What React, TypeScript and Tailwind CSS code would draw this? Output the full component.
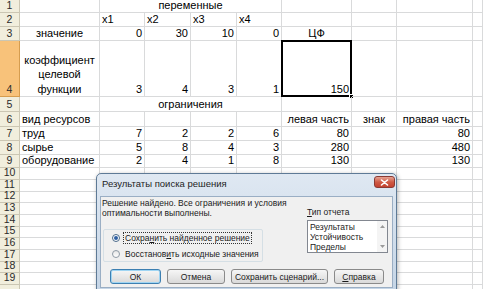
import React from 'react'

type Cell = { t?: string; a?: 'l' | 'r' | 'c' }

interface Row {
  n?: number
  h: string
  cells?: Cell[]
  merged?: string
  sel?: boolean
}

// ширины колонок A..I
const colW = ['w-[80px]', 'w-[45px]', 'w-[46px]', 'w-[46px]', 'w-[45px]', 'w-[70px]', 'w-[45px]', 'w-[76px]', 'w-[10px]']

const r = (t: string): Cell => ({ t, a: 'r' })
const l = (t: string): Cell => ({ t, a: 'l' })
const c = (t: string): Cell => ({ t, a: 'c' })

const rows: Row[] = [
  { n: 1, h: 'h-[13px]', merged: 'переменные' },
  { n: 2, h: 'h-[14px]', cells: [{}, l('x1'), l('x2'), l('x3'), l('x4'), {}, {}, {}, {}] },
  { n: 3, h: 'h-[14px]', cells: [c('значение'), r('0'), r('30'), r('10'), r('0'), c('ЦФ'), {}, {}, {}] },
  { n: 4, h: 'h-[56px]', sel: true, cells: [c('коэффициент целевой функции'), r('3'), r('4'), r('3'), r('1'), r('150'), {}, {}, {}] },
  { n: 5, h: 'h-[15px]', merged: 'ограничения' },
  { n: 6, h: 'h-[15px]', cells: [l('вид ресурсов'), {}, {}, {}, {}, r('левая часть'), c('знак'), r('правая часть'), {}] },
  { n: 7, h: 'h-[14px]', cells: [l('труд'), r('7'), r('2'), r('2'), r('6'), r('80'), {}, r('80'), {}] },
  { n: 8, h: 'h-[14px]', cells: [l('сырье'), r('5'), r('8'), r('4'), r('3'), r('280'), {}, r('480'), {}] },
  { n: 9, h: 'h-[13px]', cells: [l('оборудование'), r('2'), r('4'), r('1'), r('8'), r('130'), {}, r('130'), {}] },
  { n: 10, h: 'h-[12px]' },
  { n: 11, h: 'h-[12px]' },
  { n: 12, h: 'h-[11px]' },
  { n: 13, h: 'h-[12px]' },
  { n: 14, h: 'h-[12px]' },
  { n: 15, h: 'h-[11px]' },
  { n: 16, h: 'h-[12px]' },
  { n: 17, h: 'h-[12px]' },
  { n: 18, h: 'h-[11px]' },
  { n: 19, h: 'h-[12px]' },
  { h: 'h-[12px]' },
]

const alignCls = (a?: string) =>
  a === 'r' ? 'justify-end pr-[2px]' : a === 'c' ? 'justify-center text-center' : 'justify-start pl-[2px]'

function GridCell({ w, cell, sel }: { w: string; cell?: Cell; sel?: boolean }) {
  return (
    <div
      className={`${w} relative flex shrink-0 items-end border-r border-b border-[#d9dadb] leading-[13px] ${alignCls(cell?.a)}`}
    >
      {cell?.t && <span className="whitespace-pre-line leading-[14.5px]">{cell.t}</span>}
      {sel && (
        <>
          <div className="absolute -left-[1px] -top-[1px] -right-[1px] -bottom-[1px] border-2 border-black" />
          <div className="absolute -right-[3px] -bottom-[3px] w-[5px] h-[5px] bg-black border border-white" />
        </>
      )}
    </div>
  )
}

function Sheet() {
  return (
    <div className="flex flex-col">
      {rows.map((row, idx) => (
        <div key={idx} className={`flex ${row.h}`}>
          <div
            className={`w-[20px] shrink-0 flex items-end justify-center border-r border-b text-[10.5px] leading-[13px] text-[#2b2b2b] ${
              row.sel ? 'bg-[#f8c27a] border-[#d69d4f]' : 'bg-[#f1eedd] border-[#cbc6b3]'
            }`}
          >
            {row.n}
          </div>
          {row.merged ? (
            <>
              <GridCell w={colW[0]} />
              <GridCell w="w-[182px]" cell={c(row.merged)} />
              {colW.slice(5).map((w, i) => (
                <GridCell key={i} w={w} />
              ))}
            </>
          ) : (
            colW.map((w, i) => (
              <GridCell key={i} w={w} cell={row.cells?.[i]} sel={row.sel && i === 5} />
            ))
          )}
        </div>
      ))}
    </div>
  )
}

function Btn({ w, children, def }: { w: string; children: React.ReactNode; def?: boolean }) {
  return (
    <div
      className={`${w} h-[15px] flex items-center justify-center rounded-[3px] border bg-gradient-to-b from-[#f6f6f6] via-[#e8e8e8] to-[#d9d9d9] ${
        def ? 'border-[#3c7fb1] shadow-[inset_0_0_0_1px_#9fd5f3]' : 'border-[#8a8a8a]'
      }`}
    >
      {children}
    </div>
  )
}

function Dialog() {
  return (
    <div className="absolute left-[96px] top-[173px] w-[301px] h-[118px] rounded-t-[5px] border border-[#5e7a96] bg-gradient-to-b from-[#dfe8f2] to-[#c5d5e6] px-[3px] shadow-[1px_1px_4px_rgba(0,0,0,0.3)]">
      {/* Заголовок */}
      <div className="flex h-[22px] items-start justify-between">
        <span className="pl-[2px] pt-[4px] text-[9.5px] leading-[11px] text-[#1e1e1e]">Результаты поиска решения</span>
        <div className="mt-[2px] -mr-[2px] w-[21px] h-[12px] flex items-center justify-center rounded-[3px] border border-[#8b3a33] bg-gradient-to-b from-[#e5a293] via-[#cf5a45] to-[#c3412f]">
          <svg width="9" height="7" viewBox="0 0 9 7">
            <path d="M1.5 1 L7.5 6 M7.5 1 L1.5 6" stroke="white" strokeWidth="1.6" strokeLinecap="round" />
          </svg>
        </div>
      </div>

      {/* Тело */}
      <div className="h-[92px] border border-[#9aaec4] bg-[#f0f0f0] text-[8.5px] leading-[10px] text-[#1a1a1a]">
        <div className="flex h-[65px]">
          <div className="w-[204px] flex flex-col">
            <p className="pl-[1px] pt-[1px]">
              Решение найдено. Все ограничения и условия
              <br />
              оптимальности выполнены.
            </p>
            <div className="mt-auto ml-[2px] w-[160px] h-[33px] rounded-[2px] border border-[#d5dfe5] flex flex-col justify-center gap-[5px] pl-[8px]">
              <div className="flex items-center gap-[3px]">
                <div className="w-[8px] h-[8px] rounded-full border border-[#4a6a8a] bg-white flex items-center justify-center">
                  <div className="w-[4px] h-[4px] rounded-full bg-[#2e5fa3]" />
                </div>
                <span className="border border-dotted border-[#333] px-[1px]">
                  Сохра<u>н</u>ить найденное решение
                </span>
              </div>
              <div className="flex items-center gap-[3px]">
                <div className="w-[8px] h-[8px] rounded-full border border-[#8f9aa5] bg-gradient-to-b from-[#e6e6e6] to-white" />
                <span className="px-[2px]">
                  Восстанов<u>и</u>ть исходные значения
                </span>
              </div>
            </div>
          </div>
          <div className="flex flex-col pt-[10px] pl-[2px]">
            <span>
              <u>Т</u>ип отчета
            </span>
            <div className="mt-[3px] w-[81px] h-[33px] flex border border-[#828790] bg-white">
              <div className="flex-1 pl-[2px] pt-[1px] leading-[10px]">
                <div>Результаты</div>
                <div>Устойчивость</div>
                <div>Пределы</div>
              </div>
              <div className="w-[10px] flex flex-col items-center justify-between bg-[#f4f4f4] py-[4px]">
                <svg width="5" height="3" viewBox="0 0 5 3">
                  <path d="M0 3 L2.5 0 L5 3 Z" fill="#9a9a9a" />
                </svg>
                <svg width="5" height="3" viewBox="0 0 5 3">
                  <path d="M0 0 L2.5 3 L5 0 Z" fill="#9a9a9a" />
                </svg>
              </div>
            </div>
          </div>
        </div>

        {/* Кнопки */}
        <div className="flex gap-[6px] pl-[9px] mt-[7px]">
          <Btn w="w-[51px]" def>
            ОК
          </Btn>
          <Btn w="w-[58px]">Отмена</Btn>
          <Btn w="w-[97px]">Сохранить сценарий...</Btn>
          <Btn w="w-[50px]">
            <span>
              <u>С</u>правка
            </span>
          </Btn>
        </div>
      </div>
    </div>
  )
}

export default function App() {
  return (
    <div
      className="relative w-[483px] h-[289px] overflow-hidden bg-white text-[11px] text-black"
      style={{ fontFamily: '"Liberation Sans", Arial, sans-serif' }}
    >
      <Sheet />
      <Dialog />
    </div>
  )
}
